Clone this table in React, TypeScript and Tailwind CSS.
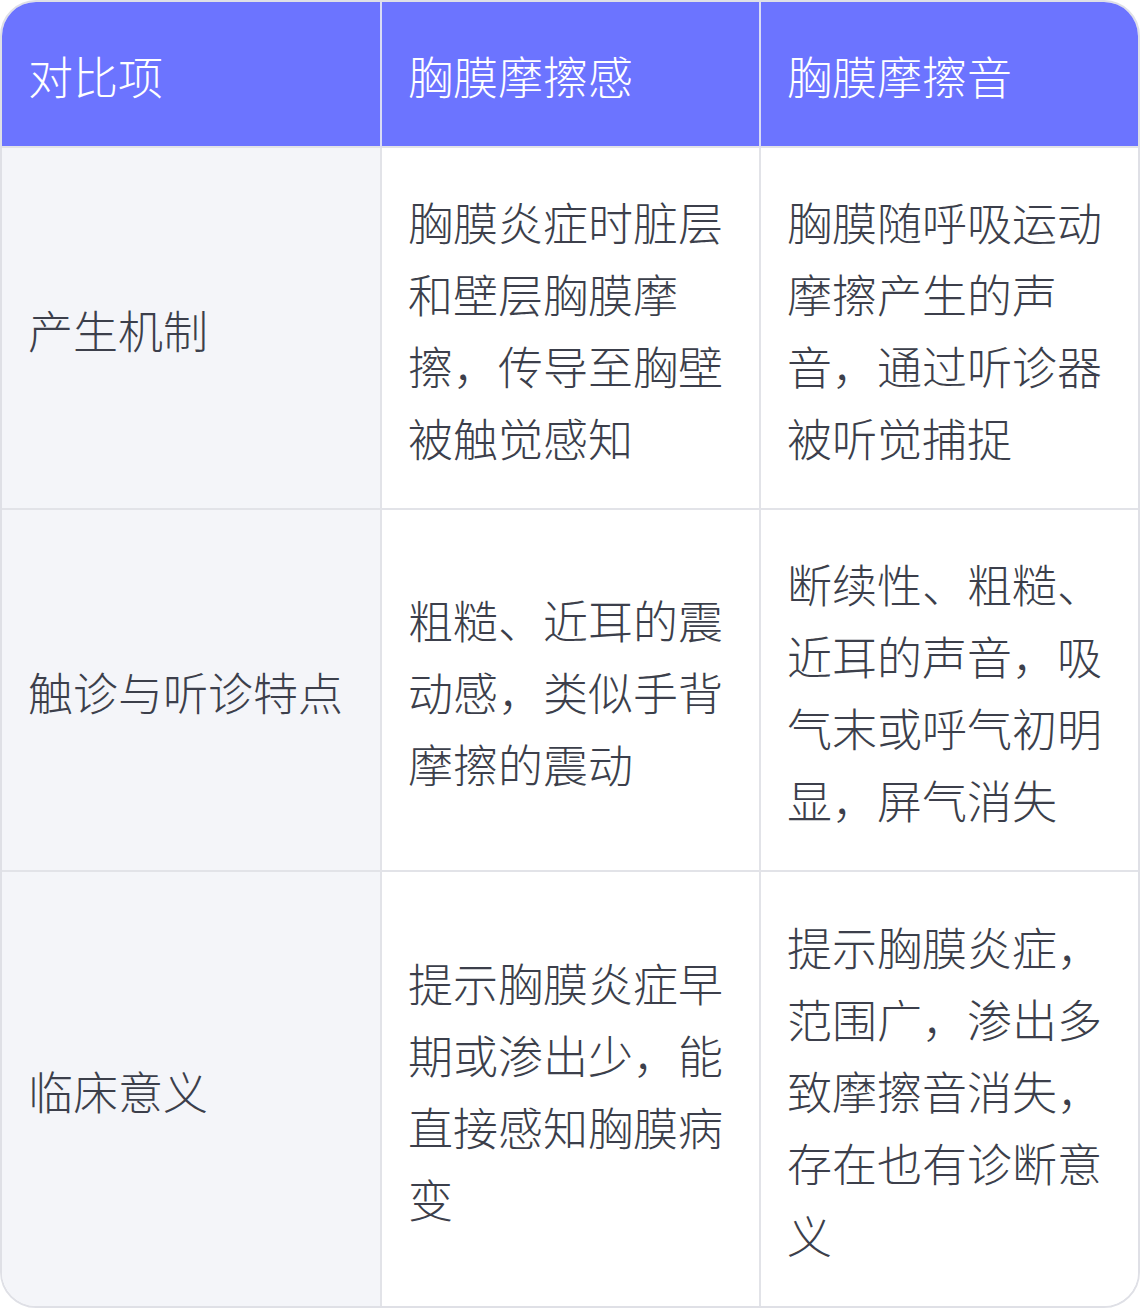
const rows = [
  {
    label: "产生机制",
    a: "胸膜炎症时脏层和壁层胸膜摩擦，传导至胸壁被触觉感知",
    b: "胸膜随呼吸运动摩擦产生的声音，通过听诊器被听觉捕捉",
  },
  {
    label: "触诊与听诊特点",
    a: "粗糙、近耳的震动感，类似手背摩擦的震动",
    b: "断续性、粗糙、近耳的声音，吸气末或呼气初明显，屏气消失",
  },
  {
    label: "临床意义",
    a: "提示胸膜炎症早期或渗出少，能直接感知胸膜病变",
    b: "提示胸膜炎症，范围广，渗出多致摩擦音消失，存在也有诊断意义",
  },
];

const font = { fontFamily: '"Noto Sans CJK SC", "Noto Sans", sans-serif' };

export default function App() {
  return (
    <div className="w-[1140px] bg-white" style={font}>
      <div className="overflow-hidden rounded-[36px] border-2 border-[#dfe0e6]">
        <div className="grid grid-cols-[380px_379px_1fr] text-[45px] leading-[72px] font-light">
          <div className="border-b-2 border-r-2 border-b-[#e2e3e8] border-r-[#d9dbf5] bg-[#6c74ff] pl-[26px] pr-6 pt-[38px] pb-[34px] text-white">
            对比项
          </div>
          <div className="border-b-2 border-r-2 border-b-[#e2e3e8] border-r-[#d9dbf5] bg-[#6c74ff] pl-[26px] pr-6 pt-[38px] pb-[34px] text-white">
            胸膜摩擦感
          </div>
          <div className="border-b-2 border-b-[#e2e3e8] bg-[#6c74ff] pl-[26px] pr-6 pt-[38px] pb-[34px] text-white">
            胸膜摩擦音
          </div>
          {rows.map((r, i) => {
            const last = i === rows.length - 1;
            const pad = last ? "pt-[39px] pb-[35px]" : "border-b-2 pt-[38px] pb-[34px]";
            return [
              <div
                key={r.label}
                className={`${pad} flex items-center border-r-2 border-[#e2e3e8] bg-[#f4f5f9] pl-[26px] pr-6 text-[#3c3f4b]`}
              >
                {r.label}
              </div>,
              <div
                key={r.label + "a"}
                className={`${pad} flex items-center border-r-2 border-[#e2e3e8] bg-white pl-[26px] pr-6 text-[#3c3f4b]`}
              >
                <span>{r.a}</span>
              </div>,
              <div
                key={r.label + "b"}
                className={`${pad} flex items-center border-[#e2e3e8] bg-white pl-[26px] pr-6 text-[#3c3f4b]`}
              >
                <span>{r.b}</span>
              </div>,
            ];
          })}
        </div>
      </div>
    </div>
  );
}
